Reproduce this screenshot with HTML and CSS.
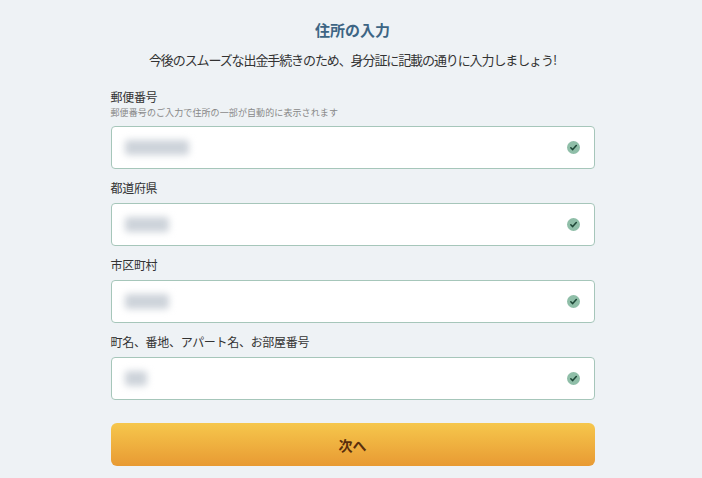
FILE: index.html
```html
<!DOCTYPE html>
<html lang="ja">
<head>
<meta charset="utf-8">
<link rel="stylesheet" href="styles.css">
</head>
<body>
<main class="wrap">
  <h1 class="title">住所の入力</h1>
  <p class="lead">今後のスムーズな出金手続きのため、身分証に記載の通りに入力しましょう!</p>

  <div class="field">
    <div class="label">郵便番号</div>
    <div class="hint">郵便番号のご入力で住所の一部が自動的に表示されます</div>
    <div class="input">
      <span class="blur" style="width:64px"></span>
      <svg class="check" width="13" height="13" viewBox="0 0 13 13"><circle cx="6.5" cy="6.5" r="6.5" fill="#8fbea8"/><path d="M3.8 6.7 L5.7 8.6 L9.3 4.6" fill="none" stroke="#1d4636" stroke-width="1.5" stroke-linecap="round" stroke-linejoin="round"/></svg>
    </div>
  </div>

  <div class="field">
    <div class="label">都道府県</div>
    <div class="input">
      <span class="blur" style="width:44px"></span>
      <svg class="check" width="13" height="13" viewBox="0 0 13 13"><circle cx="6.5" cy="6.5" r="6.5" fill="#8fbea8"/><path d="M3.8 6.7 L5.7 8.6 L9.3 4.6" fill="none" stroke="#1d4636" stroke-width="1.5" stroke-linecap="round" stroke-linejoin="round"/></svg>
    </div>
  </div>

  <div class="field">
    <div class="label">市区町村</div>
    <div class="input">
      <span class="blur" style="width:44px"></span>
      <svg class="check" width="13" height="13" viewBox="0 0 13 13"><circle cx="6.5" cy="6.5" r="6.5" fill="#8fbea8"/><path d="M3.8 6.7 L5.7 8.6 L9.3 4.6" fill="none" stroke="#1d4636" stroke-width="1.5" stroke-linecap="round" stroke-linejoin="round"/></svg>
    </div>
  </div>

  <div class="field">
    <div class="label">町名、番地、アパート名、お部屋番号</div>
    <div class="input">
      <span class="blur" style="width:22px"></span>
      <svg class="check" width="13" height="13" viewBox="0 0 13 13"><circle cx="6.5" cy="6.5" r="6.5" fill="#8fbea8"/><path d="M3.8 6.7 L5.7 8.6 L9.3 4.6" fill="none" stroke="#1d4636" stroke-width="1.5" stroke-linecap="round" stroke-linejoin="round"/></svg>
    </div>
  </div>

  <button class="next">次へ</button>
</main>
</body>
</html>
```

FILE: styles.css
```css
html, body {
  margin: 0;
  background: #eef2f5;
}
body {
  padding: 20px 0 0 3px;
  font-family: "Noto Sans CJK JP", "Noto Sans", sans-serif;
  color: #333;
}
.wrap {
  width: 484px;
  margin: 0 auto;
  display: flex;
  flex-direction: column;
}
.title {
  margin: 0;
  font-size: 15px;
  line-height: 20px;
  font-weight: 700;
  color: #3d6584;
  text-align: center;
}
.lead {
  margin: 10px 0 0;
  font-size: 13px;
  line-height: 20px;
  text-align: center;
  color: #333;
  letter-spacing: -1.1px;
}
.field {
  display: flex;
  flex-direction: column;
  margin-top: 11px;
}
.field:first-of-type {
  margin-top: 19px;
}
.label {
  font-size: 12px;
  line-height: 16px;
  color: #333;
  letter-spacing: -0.3px;
}
.hint {
  margin-top: 2px;
  font-size: 9px;
  line-height: 12px;
  color: #888;
  letter-spacing: 0.1px;
}
.input {
  margin-top: 7px;
  height: 43px;
  box-sizing: border-box;
  border: 1px solid #a6c6ba;
  border-radius: 4px;
  background: #fff;
  display: flex;
  align-items: center;
  justify-content: space-between;
  padding: 0 14px 0 13px;
}
.blur {
  display: block;
  height: 15px;
  background: #cdd3da;
  filter: blur(3.5px);
  border-radius: 3px;
}
.check {
  display: block;
}
.next {
  margin-top: 23px;
  height: 43px;
  border: none;
  border-radius: 6px;
  background: linear-gradient(#f6c74c, #e89a33);
  font-family: "Noto Sans CJK JP", sans-serif;
  font-size: 14px;
  font-weight: 700;
  color: #5a2e0c;
  cursor: pointer;
}
```
